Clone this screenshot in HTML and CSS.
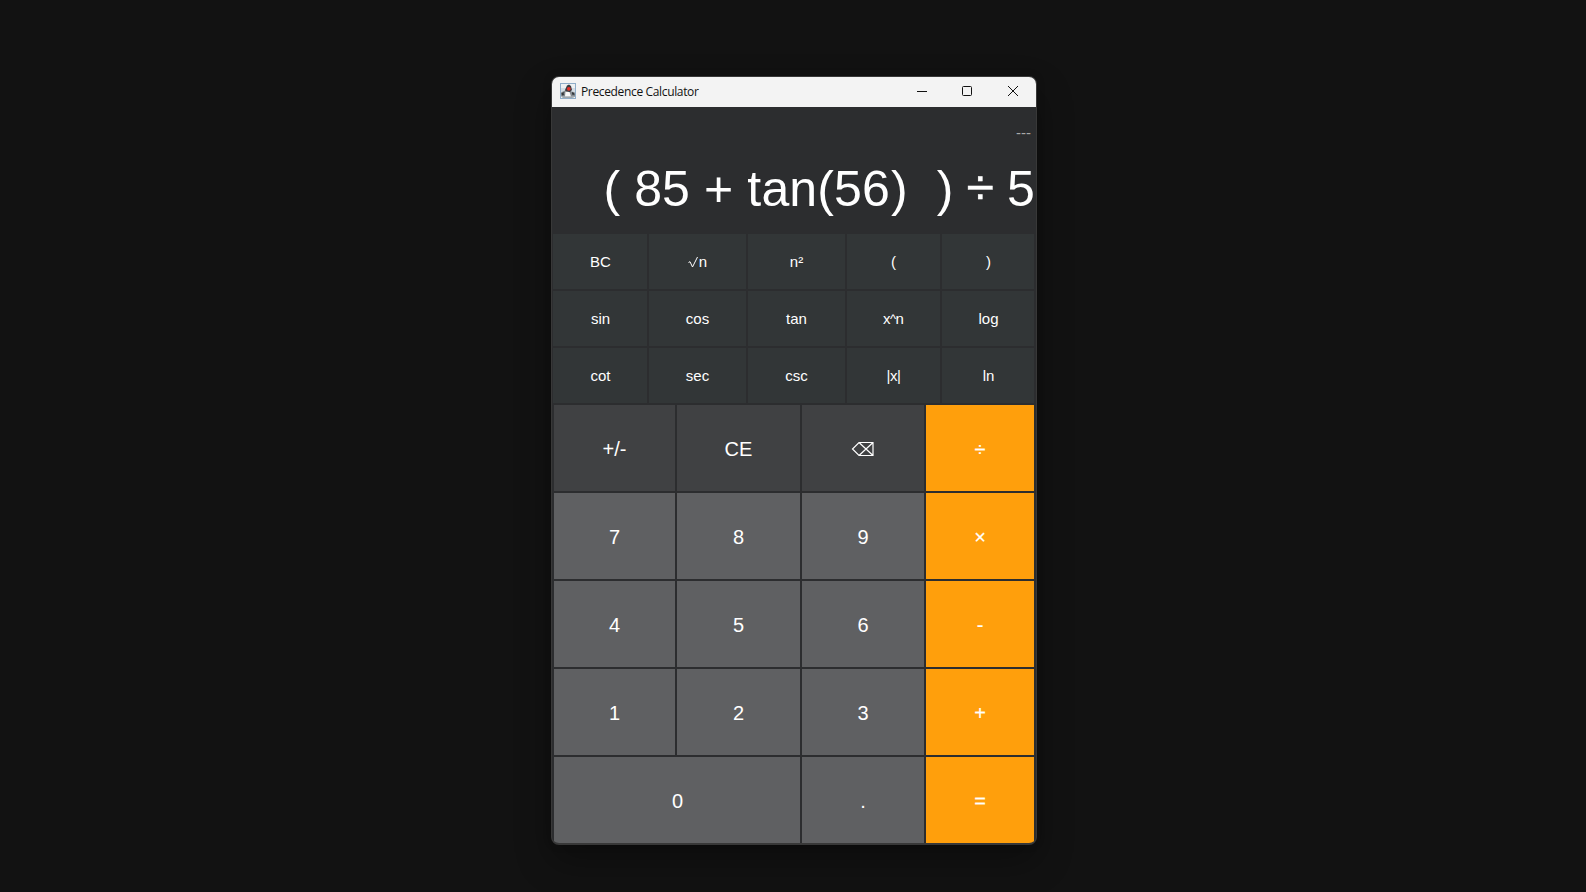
FILE: index.html
```
<!DOCTYPE html>
<html lang="en">
<head>
<meta charset="utf-8">
<title>Precedence Calculator</title>
<link rel="stylesheet" href="styles.css">
</head>
<body>
<main class="window">
  <header class="titlebar">
    <svg class="app-icon" viewBox="0 0 16 16">
      <rect x=".5" y=".5" width="15" height="15" fill="#edf0f2" stroke="#8fadc8"/>
      <path d="M1 5h14v4H1z" fill="#d3dce4"/>
      <path d="M1 9.500l4-2 5 .5 5 1.500v4l-3 1.500H3l-2-2z" fill="#868c91"/>
      <path d="M5 7l2-4.500 2-1 2 1.500 1 4-2 2-4 0z" fill="#383c40"/>
      <path d="M5.500 8.500l4 .5 1.500 4.500H5z" fill="#f8f8f8"/>
      <path d="M1.500 10l3-1-1 2 1 1-2.500.5zM12 9l2 1 .5 2-2.500-.5z" fill="#34393d"/>
      <path d="M2 14h12" stroke="#b7c2ca"/>
      <circle cx="8.800" cy="5.800" r="1.900" fill="#e3302a"/>
    </svg>
    <h1 class="title">Precedence Calculator</h1>
    <svg class="controls" viewBox="0 0 102 12" fill="none" stroke="#111" stroke-width="1">
      <path d="M0 6.500h10"/>
      <rect x="45.500" y="1.500" width="9" height="9" rx="1"/>
      <path d="M91 1l10 10M101 1L91 11"/>
    </svg>
  </header>
  <section class="display">
    <div class="history">---</div>
    <div class="expression">( 85 + tan(56<span class="close">)</span>&nbsp; <span class="paren">)</span> <span class="divide">÷</span> 5</div>
  </section>
  <section class="functions">
    <button class="fn edge">BC</button><button class="fn"><svg class="root" viewBox="0 0 10 12" fill="none" stroke="#fff"><path d="M.5 6.500l1.500-.8L4.500 11 9.500 1"/></svg>n</button><button class="fn">n²</button><button class="fn">(</button><button class="fn edge">)</button>
    <button class="fn edge">sin</button><button class="fn">cos</button><button class="fn">tan</button><button class="fn">x<span class="caret">^</span>n</button><button class="fn edge">log</button>
    <button class="fn edge">cot</button><button class="fn">sec</button><button class="fn">csc</button><button class="fn tight">|x|</button><button class="fn edge">ln</button>
  </section>
  <section class="keypad">
    <button class="key dark">+/-</button><button class="key dark">CE</button>
    <button class="key dark" aria-label="Backspace"><svg class="backspace" viewBox="0 0 24 16" fill="none" stroke="#fff" stroke-width="1.200"><path d="M8 1.500h14v13H8L1.500 8zM8 1.500l14 13M22 1.500l-14 13"/></svg></button>
    <button class="key op">÷</button>
    <button class="key">7</button><button class="key">8</button><button class="key">9</button><button class="key op">×</button>
    <button class="key">4</button><button class="key">5</button><button class="key">6</button><button class="key op">-</button>
    <button class="key">1</button><button class="key">2</button><button class="key">3</button><button class="key op">+</button>
    <button class="key zero">0</button><button class="key">.</button><button class="key op">=</button>
  </section>
</main>
</body>
</html>
```
FILE: styles.css
```
* { box-sizing: border-box; }
body {
  margin: 0;
  height: 892px;
  padding: 76px 0 0 551px;
  background: #121212;
  overflow: hidden;
  font-family: "Liberation Sans", Arial, sans-serif;
  color: #fff;
}
.window {
  width: 486px;
  height: 769px;
  border: 1px solid #383838;
  border-bottom-width: 2px;
  border-radius: 8px;
  background: #2c2d2f;
  overflow: hidden;
  box-shadow: 0 16px 36px rgba(0, 0, 0, .32), 0 0 8px rgba(0, 0, 0, .15);
}
.titlebar {
  display: flex;
  align-items: center;
  height: 30px;
  padding: 0 17px 2px 8px;
  background: #f3f3f3;
  color: #111;
}
.app-icon { width: 16px; height: 16px; margin-right: 5px; }
.title {
  flex: 1;
  margin: 0;
  font: 400 12px "Open Sans", "Noto Sans", sans-serif;
  letter-spacing: -.35px;
}
.controls { width: 102px; height: 12px; }
.display { height: 127px; text-align: right; }
.history {
  height: 47px;
  padding: 17px 5px 0 0;
  font-size: 15px;
  line-height: 18px;
  color: #a9a9a9;
}
.expression {
  padding-right: 1px;
  font-size: 50px;
  line-height: 70px;
  letter-spacing: .12px;
  white-space: nowrap;
}
.close { margin: 0 -1px 0 1px; }
.paren { margin: 0 -2px 0 2px; }
.divide { position: relative; top: -2px; margin: 0 -1px 0 1px; -webkit-text-stroke: .4px #fff; }
.functions {
  display: grid;
  grid-template-columns: 94px 97px 97px 93px 92px;
  grid-auto-rows: 55px;
  gap: 2px;
  padding-left: 1px;
}
.fn, .key {
  display: flex;
  align-items: center;
  justify-content: center;
  border: 0;
  color: #fff;
  font-family: inherit;
}
.fn { padding: 0; background: #323637; font-size: 15px; }
.edge { padding-left: 1px; }
.root { width: 10px; height: 12px; margin-right: 1px; }
.caret { width: 5px; margin-bottom: 1px; font-size: 13px; text-indent: -.5px; }
.tight { letter-spacing: -.4px; }
.keypad {
  display: grid;
  grid-template-columns: 121px 123px 122px 108px;
  grid-auto-rows: 86px;
  gap: 2px;
  padding: 2px 0 0 2px;
}
.key { padding: 2px 0 0; background: #5f6062; font-size: 20px; }
.dark { background: #404143; }
.op { background: #ff9f0c; -webkit-text-stroke: .15px #fff; }
.zero { grid-column: span 2; padding-left: 1px; }
.backspace { width: 24px; height: 16px; }
```
